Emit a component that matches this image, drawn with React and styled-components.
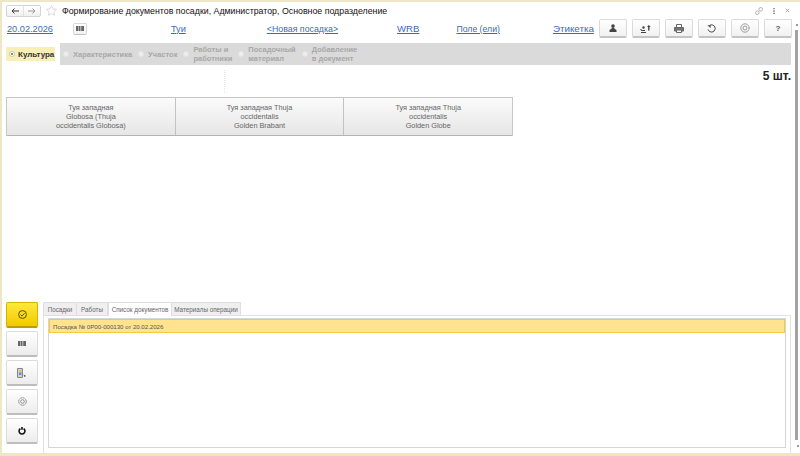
import React from 'react';
import styled, { createGlobalStyle } from 'styled-components';

const GlobalStyle = createGlobalStyle`
  html, body {
    margin: 0;
    padding: 0;
    background: #fff;
  }
  * {
    box-sizing: border-box;
  }
`;

const Window = styled.div`
  width: 800px;
  height: 456px;
  display: flex;
  background: #fff;
  border-top: 2px solid #eee6c4;
  border-left: 2px solid #eee6c4;
  border-bottom: 3px solid #eee6c4;
  font-family: "Liberation Sans", Arial, sans-serif;
  overflow: hidden;
`;

const Main = styled.div`
  width: 791px;
  flex: none;
  display: flex;
  flex-direction: column;
`;

const TitleBar = styled.div`
  height: 16px;
  padding: 1px 0 0 4px;
  display: flex;
  align-items: center;
`;

const NavGroup = styled.div`
  width: 35px;
  height: 12px;
  display: flex;
  border: 1px solid #d4d4d4;
  border-radius: 2px;
  background: linear-gradient(#fff, #f0f0f0);
`;

const NavButton = styled.div`
  flex: 1;
  display: flex;
  align-items: center;
  justify-content: center;
  & + & {
    border-left: 1px solid #e2e2e2;
  }
`;

const StarWrap = styled.div`
  margin-left: 5px;
  width: 11px;
  height: 11px;
  display: flex;
`;

const Title = styled.div`
  margin-left: 5px;
  font-size: 8.8px;
  color: #111;
  white-space: nowrap;
`;

const WindowTools = styled.div`
  margin-left: auto;
  display: flex;
  align-items: center;
  gap: 8px;
  padding-right: 3px;
`;

const HeaderRow = styled.div`
  height: 21px;
  padding-left: 5px;
  display: flex;
  align-items: center;
`;

const HeaderLink = styled.a`
  margin-left: ${props => props.$left || 0}px;
  font-size: ${props => props.$size || 9.2}px;
  color: #3a6cb6;
  text-decoration: underline;
  white-space: nowrap;
`;

const ToolGroup = styled.div`
  margin-left: 5px;
  display: flex;
  gap: 5px;
`;

const ToolButton = styled.div`
  width: 28px;
  height: 19px;
  display: flex;
  align-items: center;
  justify-content: center;
  background: linear-gradient(#fff, #f1f1f1);
  border: 1px solid #dadada;
  border-bottom: 2px solid #c4c4c4;
  border-radius: 2px;
  font-size: 8px;
  font-weight: 700;
  color: #555;
`;

const BarcodeButton = styled(ToolButton)`
  width: 14px;
  height: 12px;
  margin-left: 20px;
  flex: none;
  border-bottom-width: 1px;
`;

const StepsRow = styled.div`
  height: 22px;
  margin-top: 4px;
  padding-left: 4px;
  display: flex;
  align-items: center;
`;

const ActiveStep = styled.div`
  width: 49px;
  height: 14px;
  flex: none;
  display: flex;
  align-items: center;
  gap: 3px;
  padding-left: 3px;
  background: #f8efb4;
  font-size: 8px;
  font-weight: 700;
  color: #333;
`;

const StepsBand = styled.div`
  height: 22px;
  width: 731px;
  margin-left: 5px;
  padding-left: 3px;
  display: flex;
  align-items: center;
  background: #dadada;
`;

const Step = styled.div`
  margin-right: 6px;
  display: flex;
  align-items: center;
  gap: 4px;
  font-size: 7.5px;
  line-height: 9px;
  font-weight: 700;
  color: #a8a8a8;
  white-space: nowrap;
`;

const Radio = styled.span`
  width: 6px;
  height: 6px;
  flex: none;
  border-radius: 50%;
  background: #eee;
  border: 1px solid #e4e4e4;
`;

const ActiveRadio = styled.span`
  width: 6px;
  height: 6px;
  flex: none;
  display: flex;
  align-items: center;
  justify-content: center;
  border-radius: 50%;
  background: #fff;
  border: 1px solid #c4c4c4;
  &::after {
    content: '';
    width: 2px;
    height: 2px;
    border-radius: 50%;
    background: #2e8b3a;
  }
`;

const CountRow = styled.div`
  position: relative;
  height: 32px;
  padding: 4px 2px 0 0;
  text-align: right;
  font-size: 12px;
  font-weight: 700;
  color: #222;
`;

const DottedLine = styled.span`
  position: absolute;
  left: 222px;
  top: 5px;
  height: 23px;
  border-left: 1px dotted #e4e4e4;
`;

const VarietyRow = styled.div`
  margin-left: 4px;
  width: 507px;
  height: 39px;
  display: flex;
  background: linear-gradient(#fbfbfb, #e6e6e6);
  border: 1px solid #c6c6c6;
  border-bottom-color: #b4b4b4;
  border-radius: 1px;
`;

const VarietyButton = styled.div`
  flex: 1;
  display: flex;
  align-items: center;
  justify-content: center;
  padding-top: 2px;
  text-align: center;
  font-size: 7.3px;
  line-height: 8.8px;
  color: #666;
  & + & {
    border-left: 1px solid #c2c2c2;
  }
`;

const Bottom = styled.div`
  margin-top: auto;
  height: 151px;
  padding-left: 4px;
  display: flex;
`;

const SideColumn = styled.div`
  width: 32px;
  display: flex;
  flex-direction: column;
  gap: 3px;
`;

const SideButton = styled.div`
  height: 26px;
  display: flex;
  align-items: center;
  justify-content: center;
  background: ${props => props.$primary
    ? 'linear-gradient(#fde93a, #f2c900)'
    : 'linear-gradient(#fff, #ececec)'};
  border: 1px solid ${props => props.$primary ? '#d5b400' : '#dcdcdc'};
  border-bottom: 2px solid ${props => props.$primary ? '#b89c00' : '#bdbdbd'};
  border-radius: 2px;
`;

const TabsArea = styled.div`
  margin-left: 5px;
  width: 748px;
  display: flex;
  flex-direction: column;
`;

const TabBar = styled.div`
  position: relative;
  z-index: 1;
  height: 14px;
  display: flex;
`;

const Tab = styled.div`
  width: ${props => props.$width}px;
  display: flex;
  align-items: center;
  justify-content: center;
  font-size: 6.3px;
  color: #666;
  white-space: nowrap;
  background: ${props => props.$active ? '#fff' : '#efefef'};
  border: 1px solid #dedede;
  border-left-width: ${props => props.$first || props.$active ? 1 : 0}px;
  border-bottom: ${props => props.$active ? 'none' : '1px solid #dedede'};
  border-radius: 1px 1px 0 0;
`;

const TabPanel = styled.div`
  flex: 1;
  padding: 2px 4px 3px;
  border-top: 1px solid #e2e2e2;
  border-left: 1px solid #e2e2e2;
  border-right: 1px solid #e2e2e2;
  margin-top: -1px;
`;

const DocList = styled.div`
  height: 130px;
  border: 1px solid #d6d6d6;
  background: #fff;
`;

const DocRow = styled.div`
  height: 14px;
  display: flex;
  align-items: center;
  padding-left: 3px;
  background: #ffe38e;
  border: 1px solid #f3cb3c;
  font-size: 6.1px;
  color: #555;
`;

const ScrollTrack = styled.div`
  flex: 1;
  position: relative;
`;

const ScrollThumb = styled.div`
  position: absolute;
  left: 2px;
  top: 28px;
  width: 3px;
  height: 410px;
  background: #a3a3a3;
`;

const ScrollArrow = styled.span`
  position: absolute;
  left: ${props => props.$left}px;
  top: ${props => props.$top}px;
  width: 2px;
  height: 2px;
  background: #9a9a9a;
`;

const Barcode = () => (
  <svg width="8" height="5" viewBox="0 0 8 5">
    <path d="M0 0h2.500v5H0zM3 0h1.500v5H3zM5.200 0h2.800v5H5.200z" fill="#666" />
  </svg>
);

const Gear = ({ size = 10, color = '#888' }) => (
  <svg width={size} height={size} viewBox="0 0 12 12" fill="none" stroke={color}>
    <circle cx="6" cy="6" r="5" strokeWidth="1.200" strokeDasharray="2 .6" />
    <circle cx="6" cy="6" r="2.400" strokeWidth="1" />
  </svg>
);

const toolIcons = [
  <svg key="user" width="8" height="8" viewBox="0 0 8 8" fill="#444">
    <circle cx="4" cy="2" r="1.800" />
    <path d="M2.800 3.500h2.400l.3 1.300L7.500 6v2H.5V6l2-1.200z" />
  </svg>,
  <svg key="move" width="11" height="9" viewBox="0 0 11 9" fill="#444">
    <path d="M0 5h1l1 1h3v1H1.500zM1 8h5v1H1z" />
    <path d="M7 3l1.800-2L10.600 3H9.500v3.500H8.100V3z" />
    <circle cx="3.500" cy="3.500" r="1.200" />
  </svg>,
  <svg key="print" width="10" height="9" viewBox="0 0 10 9">
    <path d="M2.500 3.500v-3h5v3" fill="#fff" stroke="#666" />
    <path d="M.5 3.500h9V7H.5z" fill="#777" stroke="#666" />
    <path d="M2.500 6h5v2.500h-5z" fill="#fff" stroke="#666" />
  </svg>,
  <svg key="refresh" width="9" height="9" viewBox="0 0 10 10" fill="none">
    <path d="M3 1.500A4 4 0 1 1 1.200 6" stroke="#444" strokeWidth="1.100" />
    <path d="M.5 1.500h3.500v3z" fill="#444" />
  </svg>,
  <Gear key="gear" />,
  '?',
];

const stepsData = [
  'Характеристика',
  'Участок',
  ['Работы и', 'работники'],
  ['Посадочный', 'материал'],
  ['Добавление', 'в документ'],
];

const varieties = [
  ['Туя западная', 'Globosa (Thuja', 'occidentalis Globosa)'],
  ['Туя западная Thuja', 'occidentalis', 'Golden Brabant'],
  ['Туя западная Thuja', 'occidentalis', 'Golden Globe'],
];

const tabs = [
  { label: 'Посадки', width: 34, first: true },
  { label: 'Работы', width: 31 },
  { label: 'Список документов', width: 64, active: true },
  { label: 'Материалы операции', width: 69 },
];

const App = () => (
  <>
    <GlobalStyle />
    <Window>
      <Main>
        <TitleBar>
          <NavGroup>
            <NavButton>
              <svg width="8" height="6" viewBox="0 0 8 6" fill="none" stroke="#333">
                <path d="M8 3H1M3.500.5L1 3l2.500 2.500" />
              </svg>
            </NavButton>
            <NavButton>
              <svg width="8" height="6" viewBox="0 0 8 6" fill="none" stroke="#999">
                <path d="M0 3h7M4.500.5L7 3 4.500 5.500" />
              </svg>
            </NavButton>
          </NavGroup>
          <StarWrap>
            <svg width="11" height="11" viewBox="0 0 11 11" fill="none" stroke="#d2d2d2" strokeWidth=".8">
              <path d="M5.500.6l1.500 3.300 3.500.4-2.600 2.400.7 3.600-3.100-1.800-3.100 1.800.7-3.600L.5 4.300l3.500-.4z" />
            </svg>
          </StarWrap>
          <Title>Формирование документов посадки, Администратор, Основное подразделение</Title>
          <WindowTools>
            <svg width="8" height="8" viewBox="0 0 8 8" fill="none" stroke="#aaa" strokeWidth=".9">
              <circle cx="2.300" cy="5.700" r="1.800" />
              <circle cx="5.700" cy="2.300" r="1.800" />
            </svg>
            <svg width="6" height="6" viewBox="0 0 6 8" fill="#777">
              <path d="M2 0h2v1.800H2zM2 3.100h2v1.800H2zM2 6.200h2V8H2z" />
            </svg>
            <svg width="5" height="5" viewBox="0 0 6 6" fill="none" stroke="#999">
              <path d="M1 1l4 4M5 1L1 5" />
            </svg>
          </WindowTools>
        </TitleBar>

        <HeaderRow>
          <HeaderLink>20.02.2026</HeaderLink>
          <BarcodeButton><Barcode /></BarcodeButton>
          <HeaderLink $left={84}>Туи</HeaderLink>
          <HeaderLink $left={81} $size={8.8}>&lt;Новая посадка&gt;</HeaderLink>
          <HeaderLink $left={59} $size={9.6}>WRB</HeaderLink>
          <HeaderLink $left={37} $size={8.7}>Поле (ели)</HeaderLink>
          <HeaderLink $left={53} $size={9.8}>Этикетка</HeaderLink>
          <ToolGroup>
            {toolIcons.map((icon, i) => (
              <ToolButton key={i}>{icon}</ToolButton>
            ))}
          </ToolGroup>
        </HeaderRow>

        <StepsRow>
          <ActiveStep>
            <ActiveRadio />
            Культура
          </ActiveStep>
          <StepsBand>
            {stepsData.map((step, i) => (
              <Step key={i}>
                <Radio />
                <span>
                  {[].concat(step).map((line, j) => (
                    <div key={j}>{line}</div>
                  ))}
                </span>
              </Step>
            ))}
          </StepsBand>
        </StepsRow>

        <CountRow>
          <DottedLine />
          5 шт.
        </CountRow>

        <VarietyRow>
          {varieties.map((lines, i) => (
            <VarietyButton key={i}>
              <div>
                {lines.map((line, j) => (
                  <div key={j}>{line}</div>
                ))}
              </div>
            </VarietyButton>
          ))}
        </VarietyRow>

        <Bottom>
          <SideColumn>
            <SideButton $primary>
              <svg width="9" height="9" viewBox="0 0 9 9" fill="none" stroke="#5a5000">
                <circle cx="4.500" cy="4.500" r="3.900" />
                <path d="M2.500 4.500l1.500 1.500 2.500-2.700" />
              </svg>
            </SideButton>
            <SideButton><Barcode /></SideButton>
            <SideButton>
              <svg width="10" height="10" viewBox="0 0 10 10">
                <path d="M.5.5h5v9h-5z" fill="#d0d0d0" stroke="#888" />
                <path d="M2 2h2.500v2.500H2z" fill="#e8c34a" />
                <path d="M2 4.500h2.500V7H2z" fill="#5c93d8" />
                <path d="M6.500 6.500l2.500 1.500-1.500 1z" fill="#444" />
              </svg>
            </SideButton>
            <SideButton><Gear size={9} color="#777" /></SideButton>
            <SideButton>
              <svg width="8" height="8" viewBox="0 0 9 9" fill="none" stroke="#111" strokeWidth="1.800">
                <path d="M2.700 1.800a3.300 3.300 0 1 0 3.600 0" />
                <path d="M4.500 0v3" />
              </svg>
            </SideButton>
          </SideColumn>

          <TabsArea>
            <TabBar>
              {tabs.map(tab => (
                <Tab key={tab.label} $width={tab.width} $first={tab.first} $active={tab.active}>
                  {tab.label}
                </Tab>
              ))}
            </TabBar>
            <TabPanel>
              <DocList>
                <DocRow>Посадка № 0Р00-000130 от 20.02.2026</DocRow>
              </DocList>
            </TabPanel>
          </TabsArea>
        </Bottom>
      </Main>
      <ScrollTrack>
        <ScrollArrow $left={3} $top={22} />
        <ScrollThumb />
        <ScrollArrow $left={4} $top={443} />
      </ScrollTrack>
    </Window>
  </>
);

export default App;
